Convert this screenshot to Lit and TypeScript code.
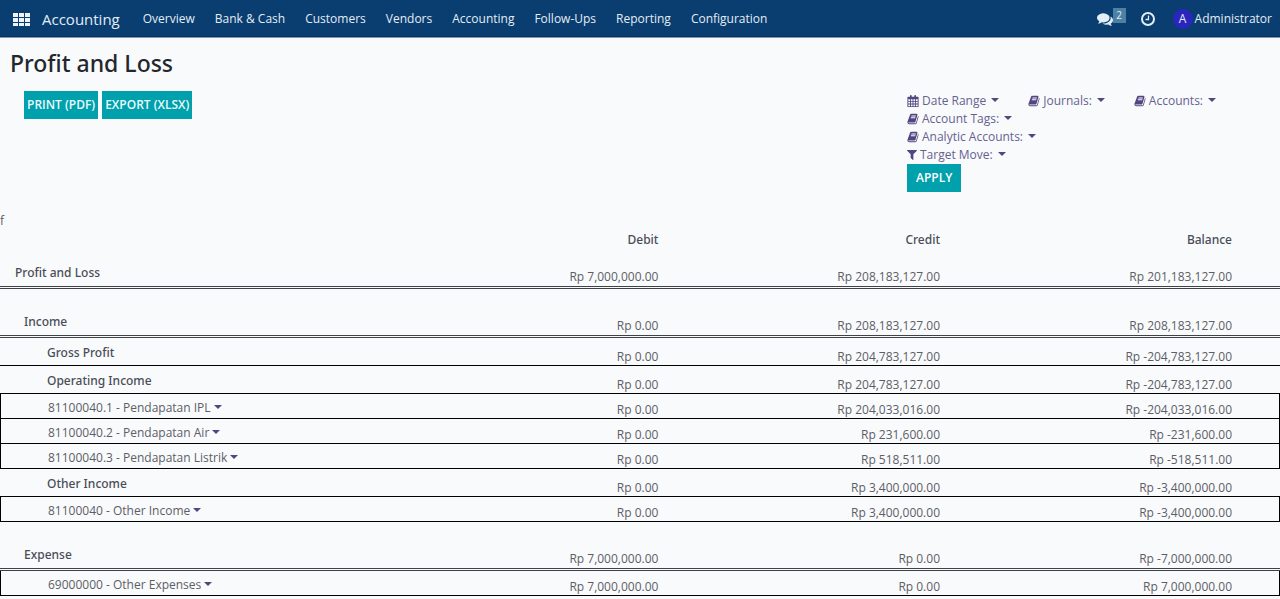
import { LitElement, html, css, svg } from "lit";
import { customElement } from "lit/decorators.js";

const bookIcon = html`<svg class="icon" viewBox="0 0 1792 1792" aria-hidden="true"><path fill="currentColor" d="M1703 478q40 57 18 129l-275 906q-19 64-76.500 107.500t-122.500 43.500h-923q-77 0-148.500-53.500t-99.500-131.500q-24-67-2-127 0-4 3-27t4-37q1-8-3-21.500t-3-19.500q2-11 8-21t16.500-23.500 16.500-23.500q23-38 45-91.500t30-91.500q3-10 .5-30t-.5-28q3-11 17-28t17-23q21-36 42-92t25-90q1-9-2.500-32t.5-28q4-13 22-30.500t22-22.500q19-26 42.500-84.500t27.500-96.500q1-8-3-25.500t-2-26.500q2-8 9-18t18-23 17-21q8-12 16.500-30.500t15-35 16-36 19.500-32 26.500-23.500 36-11.500 47.500 5.500l-1 3q38-9 51-9h761q74 0 114 56t18 130l-274 906q-36 119-71.500 153.500t-128.500 34.500h-869q-27 0-38 15-11 16-1 43 24 70 144 70h923q29 0 56-15.500t35-41.500l300-987q7-22 5-57 38 15 59 43zm-1064 2q-4 13 2 22.500t20 9.500h608q13 0 25.500-9.500t16.500-22.500l21-64q4-13-2-22.500t-20-9.500h-608q-13 0-25.500 9.500t-16.500 22.500zm-83 256q-4 13 2 22.500t20 9.500h608q13 0 25.500-9.500t16.500-22.500l21-64q4-13-2-22.500t-20-9.500h-608q-13 0-25.500 9.500t-16.500 22.500z"/></svg>`;

const filterIcon = html`<svg class="icon narrow" viewBox="192 128 1408 1664" aria-hidden="true"><path fill="currentColor" d="M1595 295q17 41-14 70l-493 493v742q0 42-39 59-13 5-25 5-27 0-45-19l-256-256q-19-19-19-45v-486l-493-493q-31-29-14-70 17-39 59-39h1280q42 0 59 39z"/></svg>`;

const calendarIcon = html`<svg class="icon" viewBox="0 0 13 14" aria-hidden="true">
  <path fill="currentColor" fill-rule="evenodd" d="M1 2h2V1q0-1 1-1t1 1v1h3V1q0-1 1-1t1 1v1h2q1 0 1 1v10q0 1-1 1H1q-1 0-1-1V3q0-1 1-1zM1 5v2h2V5zM4 5v2h2V5zM7 5v2h2V5zM10 5v2h2V5zM1 8v2h2V8zM4 8v2h2V8zM7 8v2h2V8zM10 8v2h2V8zM1 11v2h2v-2zM4 11v2h2v-2zM7 11v2h2v-2zM10 11v2h2v-2z"/>
</svg>`;

const appsIcon = html`<svg width="17" height="13" viewBox="0 0 17 13" aria-hidden="true">
  ${[0, 6, 12].map((x) => [0, 5, 10].map((y) => svg`<rect x=${x} y=${y} width="5" height="4" fill="#eef4fa"/>`))}
</svg>`;

const commentsIcon = html`<svg width="16" height="16" viewBox="0 0 1792 1792" aria-hidden="true"><path fill="currentColor" d="M1408 768q0 139-94 257t-256.500 186.500-353.500 68.500q-86 0-176-16-124 88-278 128-36 9-86 16h-3q-11 0-20.500-8t-11.500-21q-1-3-1-6.500t.5-6.500 2-6l2.500-5 3.500-5.500 4-5 4.500-5 4-4.500q5-6 23-25t26-29.500 22.500-29 25-38.500 20.500-44q-124-72-195-177t-71-224q0-139 94-257t256.500-186.500 353.500-68.500 353.500 68.500 256.500 186.500 94 257zm384 256q0 120-71 224.500t-195 176.500q10 24 20.500 44t25 38.500 22.500 29 26 29.500 23 25q1 1 4 4.500t4.500 5 4 5 3.500 5.500l2.500 5 2 6 .5 6.500-1 6.500q-3 14-13 22t-22 7q-50-7-86-16-154-40-278-128-90 16-176 16-271 0-472-132 58 4 88 4 161 0 309-45t264-129q125-92 192-212t67-254q0-77-23-152 129 71 204 178t75 230z"/></svg>`;

const clockIcon = html`<svg width="14" height="14" viewBox="0 0 14 14" aria-hidden="true">
  <circle cx="7" cy="7" r="6" fill="none" stroke="currentColor" stroke-width="2"/>
  <path d="M7.500 3.500v4H4.500" fill="none" stroke="currentColor" stroke-width="1.300"/>
</svg>`;

interface Row {
  kind: "total" | "section" | "group" | "account";
  label: string;
  values: [string, string, string];
}

const rows: Row[] = [
  { kind: "total", label: "Profit and Loss", values: ["Rp 7,000,000.00", "Rp 208,183,127.00", "Rp 201,183,127.00"] },
  { kind: "section", label: "Income", values: ["Rp 0.00", "Rp 208,183,127.00", "Rp 208,183,127.00"] },
  { kind: "group", label: "Gross Profit", values: ["Rp 0.00", "Rp 204,783,127.00", "Rp -204,783,127.00"] },
  { kind: "group", label: "Operating Income", values: ["Rp 0.00", "Rp 204,783,127.00", "Rp -204,783,127.00"] },
  { kind: "account", label: "81100040.1 - Pendapatan IPL", values: ["Rp 0.00", "Rp 204,033,016.00", "Rp -204,033,016.00"] },
  { kind: "account", label: "81100040.2 - Pendapatan Air", values: ["Rp 0.00", "Rp 231,600.00", "Rp -231,600.00"] },
  { kind: "account", label: "81100040.3 - Pendapatan Listrik", values: ["Rp 0.00", "Rp 518,511.00", "Rp -518,511.00"] },
  { kind: "group", label: "Other Income", values: ["Rp 0.00", "Rp 3,400,000.00", "Rp -3,400,000.00"] },
  { kind: "account", label: "81100040 - Other Income", values: ["Rp 0.00", "Rp 3,400,000.00", "Rp -3,400,000.00"] },
  { kind: "section", label: "Expense", values: ["Rp 7,000,000.00", "Rp 0.00", "Rp -7,000,000.00"] },
  { kind: "account", label: "69000000 - Other Expenses", values: ["Rp 7,000,000.00", "Rp 0.00", "Rp 7,000,000.00"] },
];

@customElement("app-navbar")
export class AppNavbar extends LitElement {
  static styles = css`
    :host { display: block; }
    .bar { display: flex; align-items: center; height: 37px; box-sizing: border-box; padding: 2px 8px 0 13px; background: #0a3d70; border-bottom: 1px solid #08305c; box-shadow: 0 1px 0 #7f9bb8; color: #e3edf6; }
    .apps, .tool { display: flex; align-items: center; padding: 0; border: 0; background: none; color: inherit; font: inherit; cursor: pointer; }
    .brand { margin-left: 12px; font-size: 15px; color: inherit; text-decoration: none; }
    .menu { display: flex; gap: 20px; margin-left: 23px; }
    .menu a { color: inherit; text-decoration: none; white-space: nowrap; }
    .tools { display: flex; align-items: center; margin-left: auto; }
    .badge { align-self: flex-start; margin: 0 15px 8px 0; width: 13px; line-height: 15px; text-align: center; font-size: 10px; background: #4d81a3; }
    .avatar { width: 20px; height: 20px; line-height: 20px; margin: 0 2px 0 18px; border-radius: 50%; background: #2a26bd; text-align: center; }
  `;

  render() {
    const items = ["Overview", "Bank & Cash", "Customers", "Vendors", "Accounting", "Follow-Ups", "Reporting", "Configuration"];
    return html`
      <header class="bar">
        <button class="apps" aria-label="Applications">${appsIcon}</button>
        <a class="brand" href="#">Accounting</a>
        <nav class="menu">${items.map((item) => html`<a href="#">${item}</a>`)}</nav>
        <div class="tools">
          <button class="tool" aria-label="Conversations">${commentsIcon}<span class="badge">2</span></button>
          <button class="tool" aria-label="Activities">${clockIcon}</button>
          <button class="tool"><span class="avatar">A</span><span>Administrator</span></button>
        </div>
      </header>
    `;
  }
}

@customElement("app-filters")
export class AppFilters extends LitElement {
  static styles = css`
    :host { display: block; padding-top: 1px; }
    .list { display: flex; flex-wrap: wrap; align-items: center; }
    .filter { display: flex; align-items: center; height: 18px; padding: 0; border: 0; background: none; color: #66628f; font: inherit; cursor: pointer; white-space: nowrap; }
    .icon { width: 12px; height: 12px; margin-right: 3px; color: #51467f; }
    .narrow { width: 10px; }
    .caret { border: 4px solid transparent; border-top-color: #51467f; border-bottom: 0; margin: 0 0 2px 5px; }
    .gap { margin-right: 29px; }
    .apply { height: 28px; padding: 0 9px; border: 0; background: #00a0ad; color: #fff; font: inherit; font-weight: 600; cursor: pointer; }
  `;

  render() {
    const filter = (icon: unknown, label: string, cls = "") =>
      html`<button class="filter ${cls}">${icon}<span>${label}</span><span class="caret"></span></button>`;
    return html`
      <div class="list">
        ${filter(calendarIcon, "Date Range", "gap")}
        ${filter(bookIcon, "Journals:", "gap")}
        ${filter(bookIcon, "Accounts:")}
      </div>
      ${filter(bookIcon, "Account Tags:")}
      ${filter(bookIcon, "Analytic Accounts:")}
      ${filter(filterIcon, "Target Move:")}
      <button class="apply">APPLY</button>
    `;
  }
}

@customElement("app-report")
export class AppReport extends LitElement {
  static styles = css`
    :host { display: block; }
    table { width: 100%; table-layout: fixed; border-collapse: separate; border-spacing: 0; }
    th, td { box-sizing: border-box; padding: 0 48px 0 0; text-align: right; vertical-align: bottom; line-height: 16px; white-space: nowrap; color: #5c5e66; }
    th { color: #494d57; font-family: "Noto Sans", sans-serif; font-weight: 500; }
    .name { text-align: left; }
    .debit, .credit { width: 22%; }
    .balance { width: 292px; }
    .head th { height: 18px; padding-bottom: 1px; }
    .total th, .total td { height: 40px; padding-bottom: 1px; border-bottom: 3px double #3f4247; }
    .section th, .section td { height: 49px; padding-bottom: 1px; border-bottom: 3px double #3f4247; }
    .group th, .group td { height: 28px; border-bottom: 1px solid #000; }
    .account th, .account td { height: 25px; border-bottom: 1px solid #000; }
    .account th { border-left: 1px solid #000; color: #5c5e66; font-family: inherit; font-weight: 400; }
    .account td:last-child { border-right: 1px solid #000; padding-right: 47px; }
    .total .name { padding: 0 0 5px 15px; }
    .section .name { padding: 0 0 5px 24px; }
    .group .name { padding: 0 0 4px 47px; }
    .account .name { padding: 0 0 2px 47px; }
    .toggle { display: inline-flex; align-items: center; padding: 0; border: 0; background: none; color: inherit; font: inherit; line-height: 16px; cursor: pointer; vertical-align: bottom; }
    .caret { border: 4px solid transparent; border-top-color: #51467f; border-bottom: 0; margin: 0 0 2px 3px; }
  `;

  render() {
    return html`
      <table>
        <thead>
          <tr class="head">
            <th class="name"></th>
            <th class="debit" scope="col">Debit</th>
            <th class="credit" scope="col">Credit</th>
            <th class="balance" scope="col">Balance</th>
          </tr>
        </thead>
        <tbody>
          ${rows.map((row) => html`
            <tr class=${row.kind}>
              <th class="name" scope="row">${row.kind === "account"
                ? html`<button class="toggle"><span>${row.label}</span><span class="caret"></span></button>`
                : row.label}</th>
              ${row.values.map((value) => html`<td>${value}</td>`)}
            </tr>`)}
        </tbody>
      </table>
    `;
  }
}

@customElement("app-root")
export class AppRoot extends LitElement {
  static styles = css`
    :host { display: block; min-height: 100vh; background: #f9fafc; font: 12px/18px "Open Sans", "Noto Sans", sans-serif; color: #5c5e66; }
    .title { margin: 0; padding: 10px 10px 12px; font-family: "Noto Sans", sans-serif; font-size: 23px; line-height: 32px; font-weight: 500; color: #23272c; }
    .controls { display: flex; justify-content: space-between; padding-left: 24px; }
    .actions { display: flex; align-items: flex-start; gap: 4px; }
    .action { height: 28px; padding: 0 3px; border: 0; background: #00a0ad; color: #e9fbfc; font: inherit; font-weight: 600; cursor: pointer; }
    .filters { width: 373px; }
    .note { margin: 20px 0 1px; }
  `;

  render() {
    return html`
      <app-navbar></app-navbar>
      <main>
        <h1 class="title">Profit and Loss</h1>
        <div class="controls">
          <div class="actions">
            <button class="action">PRINT (PDF)</button>
            <button class="action">EXPORT (XLSX)</button>
          </div>
          <app-filters class="filters"></app-filters>
        </div>
        <p class="note">f</p>
        <app-report></app-report>
      </main>
    `;
  }
}
